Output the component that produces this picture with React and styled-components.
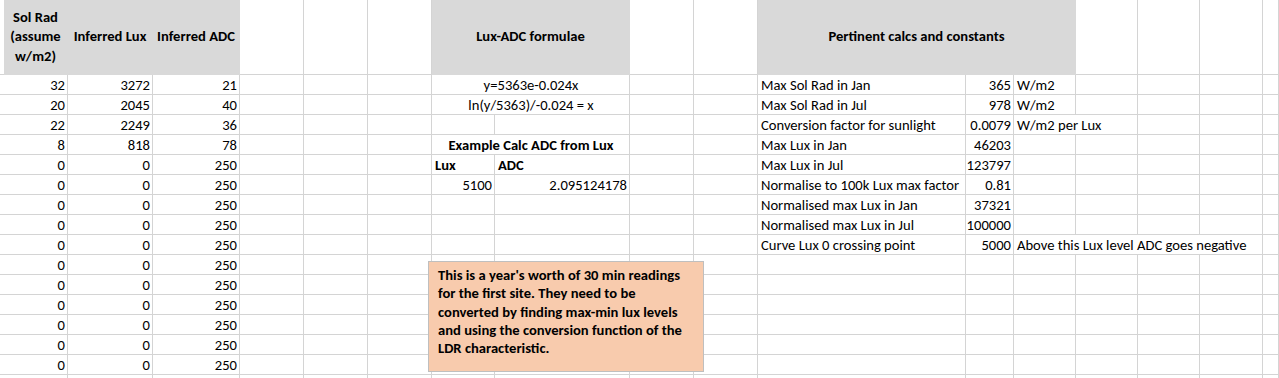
import React from "react";
import styled, { createGlobalStyle } from "styled-components";

const GlobalStyle = createGlobalStyle`
  html, body {
    margin: 0;
    padding: 0;
    background: #ffffff;
    overflow: hidden;
  }
  body {
    font-family: Carlito, Lato, "Liberation Sans", sans-serif;
    font-size: 14.6px;
    color: #000000;
  }
`;

const GRID = "#d4d4d4";
const FILL = "#d9d9d9";

const Page = styled.div`
  position: relative;
  width: 1279px;
  height: 378px;
  overflow: hidden;
`;

const Sheet = styled.div`
  display: grid;
  grid-template-columns: 4px 64px 85px 87px 64px 64px 64px 63px 135px 64px 64px 208px 48px 62px 62px 62px 63px 1fr;
  grid-template-rows: 75px repeat(16, 20px);
`;

const Cell = styled.div`
  grid-column: span ${(p) => p.$span || 1};
  box-sizing: border-box;
  min-width: 0;
  background: ${(p) => (p.$fill ? FILL : "#ffffff")};
  border-right: 1px solid ${(p) => (p.$fill ? FILL : GRID)};
  border-bottom: 1px solid ${(p) => (p.$fill ? FILL : GRID)};
  display: flex;
  align-items: flex-end;
  justify-content: ${(p) =>
    p.$align === "right" ? "flex-end" : p.$align === "center" ? "center" : "flex-start"};
  padding: 0 2px 0 3px;
  font-weight: ${(p) => (p.$bold ? 700 : 400)};
  white-space: nowrap;
  overflow: hidden;
  line-height: 18px;
`;

const HeadCell = styled(Cell)`
  align-items: center;
  justify-content: center;
  text-align: center;
  white-space: normal;
  line-height: 19.5px;
  font-weight: 700;
  padding: 0 2px;
`;

const Note = styled.div`
  position: absolute;
  left: 428px;
  top: 261px;
  width: 276px;
  height: 111px;
  box-sizing: border-box;
  background: #f8cbad;
  border: 1px solid #bfbfbf;
  padding: 4px 8px 0 9px;
  font-weight: 700;
  line-height: 18.3px;
`;

const left = [
  [32, 3272, 21],
  [20, 2045, 40],
  [22, 2249, 36],
  [8, 818, 78],
  ...Array.from({ length: 11 }, () => [0, 0, 250]),
  ["", "", ""],
];

const mid = [
  [{ t: "y=5363e-0.024x", span: 2, align: "center" }],
  [{ t: "ln(y/5363)/-0.024 = x", span: 2, align: "center" }],
  [{ t: "" }, { t: "" }],
  [{ t: "Example Calc ADC from Lux", span: 2, align: "center", bold: true }],
  [{ t: "Lux", bold: true }, { t: "ADC", bold: true }],
  [{ t: "5100", align: "right" }, { t: "2.095124178", align: "right" }],
];

const empty4 = [{ t: "" }, { t: "" }, { t: "" }, { t: "" }];

const right = [
  ["Max Sol Rad in Jan", "365", [{ t: "W/m2" }, { t: "" }, { t: "" }, { t: "" }]],
  ["Max Sol Rad in Jul", "978", [{ t: "W/m2" }, { t: "" }, { t: "" }, { t: "" }]],
  ["Conversion factor for sunlight", "0.0079", [{ t: "W/m2 per Lux", span: 2 }, { t: "" }, { t: "" }]],
  ["Max Lux in Jan", "46203", empty4],
  ["Max Lux in Jul", "123797", empty4],
  ["Normalise to 100k Lux max factor", "0.81", empty4],
  ["Normalised max Lux in Jan", "37321", empty4],
  ["Normalised max Lux in Jul", "100000", empty4],
  ["Curve Lux 0 crossing point", "5000", [{ t: "Above this Lux level ADC goes negative", span: 4 }]],
];

const renderCells = (cells, key) =>
  cells.map((c, i) => (
    <Cell key={`${key}-${i}`} $span={c.span} $align={c.align} $bold={c.bold}>
      {c.t}
    </Cell>
  ));

export default function App() {
  return (
    <Page>
      <GlobalStyle />
      <Sheet>
        <Cell />
        <HeadCell $fill>
          Sol Rad
          <br />
          (assume
          <br />
          w/m2)
        </HeadCell>
        <HeadCell $fill>Inferred Lux</HeadCell>
        <HeadCell $fill>Inferred ADC</HeadCell>
        <Cell />
        <Cell />
        <Cell />
        <HeadCell $fill $span={2}>
          Lux-ADC formulae
        </HeadCell>
        <Cell />
        <Cell />
        <HeadCell $fill $span={3}>
          Pertinent calcs and constants
        </HeadCell>
        <Cell />
        <Cell />
        <Cell />
        <Cell />

        {left.map((vals, r) => {
          const m = mid[r] || [{ t: "" }, { t: "" }];
          const rr = right[r] || ["", "", empty4];
          return (
            <React.Fragment key={r}>
              <Cell />
              {vals.map((v, i) => (
                <Cell key={i} $align="right">
                  {v}
                </Cell>
              ))}
              <Cell />
              <Cell />
              <Cell />
              {renderCells(m, `m${r}`)}
              <Cell />
              <Cell />
              <Cell>{rr[0]}</Cell>
              <Cell $align="right">{rr[1]}</Cell>
              {renderCells(rr[2], `r${r}`)}
              <Cell />
            </React.Fragment>
          );
        })}
      </Sheet>
      <Note>
        This is a year's worth of 30 min readings for the first site. They need to be
        converted by finding max-min lux levels and using the conversion function of the
        LDR characteristic.
      </Note>
    </Page>
  );
}
